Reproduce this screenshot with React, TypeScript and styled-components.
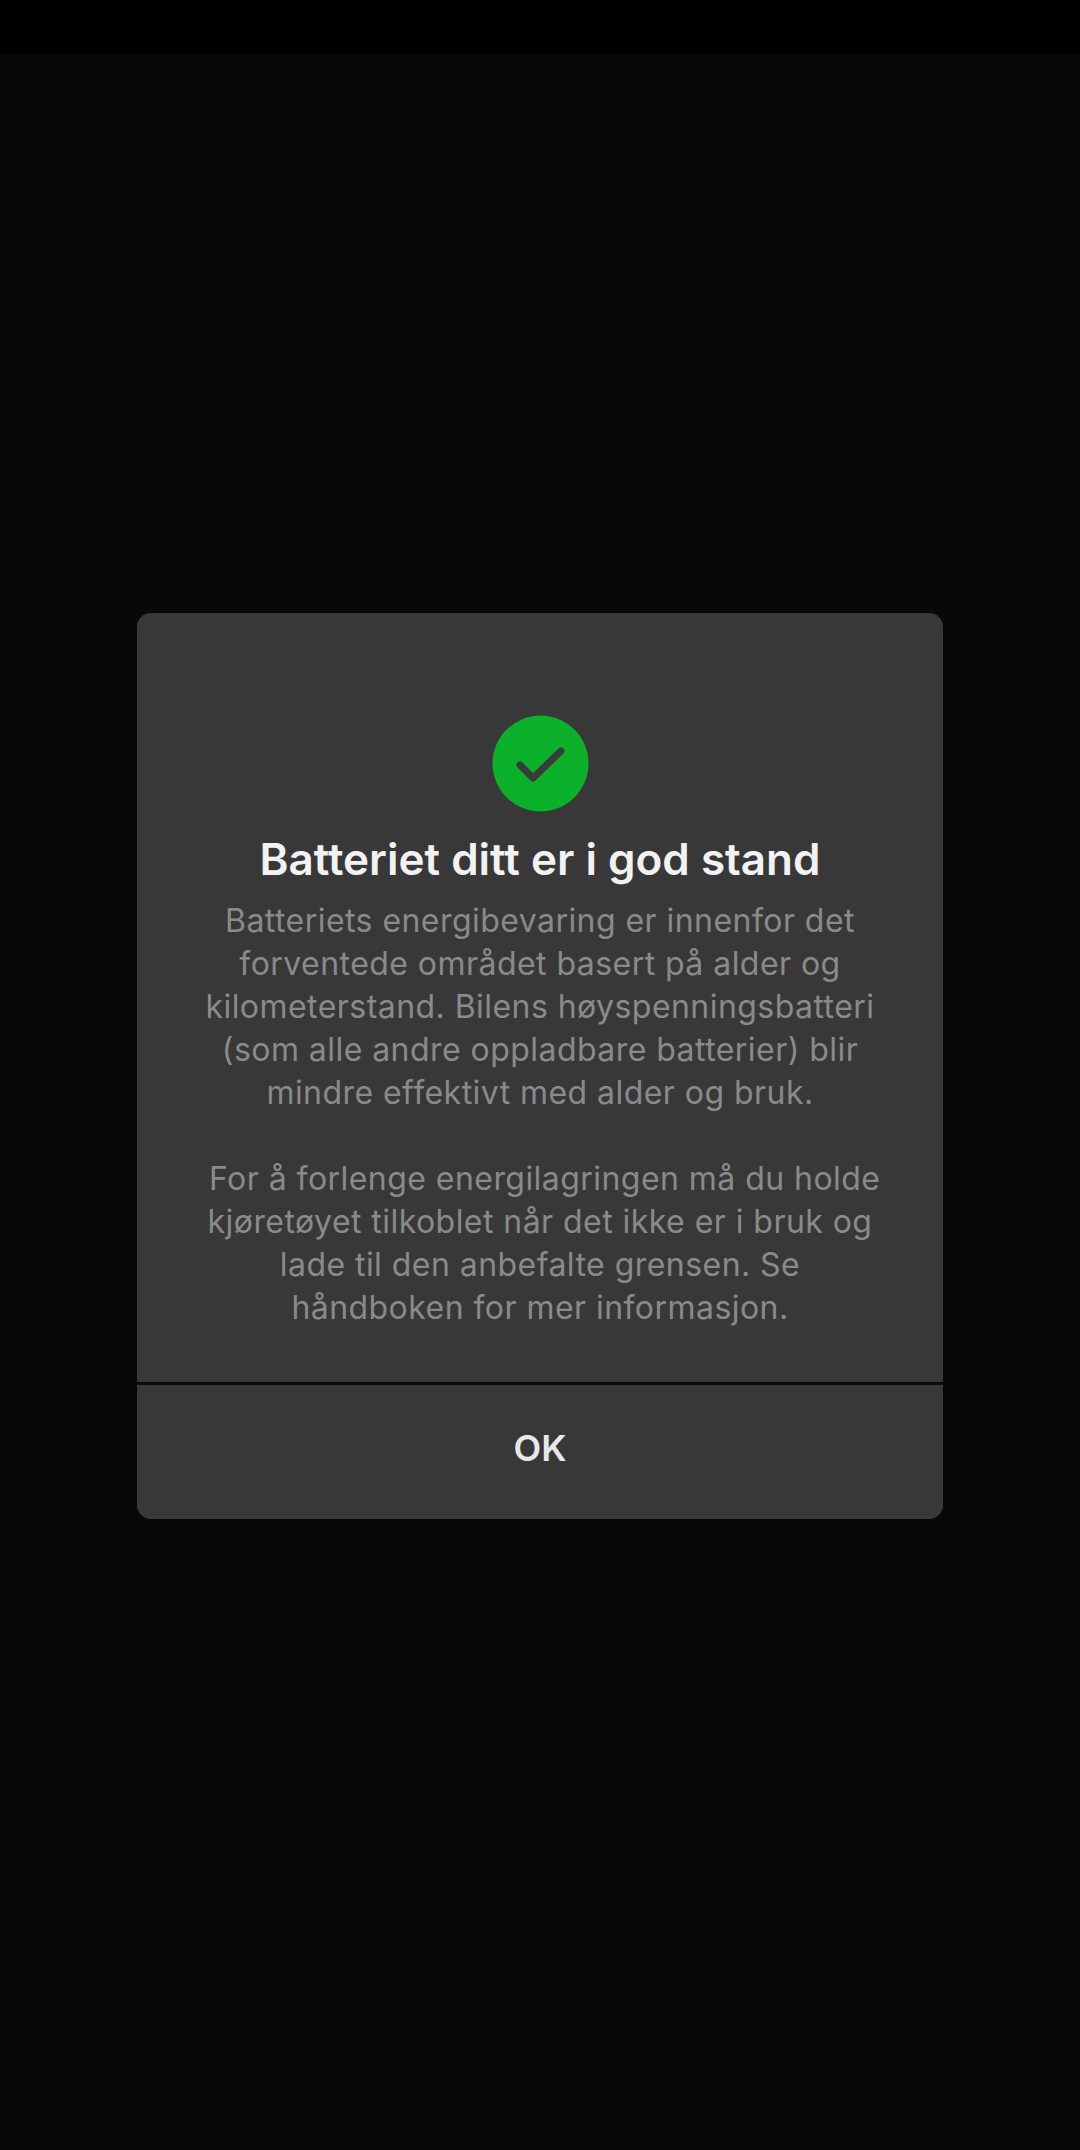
import React from 'react'
import styled, {createGlobalStyle} from 'styled-components'

const GlobalStyle = createGlobalStyle`
  html, body {
    margin: 0;
    padding: 0;
    background: #070909;
  }
`

const Screen = styled.div`
  width: 1080px;
  height: 2150px;
  display: flex;
  flex-direction: column;
  background: #070909;
  font-family: Inter, "Liberation Sans", sans-serif;
  overflow: hidden;
`

const StatusBar = styled.div`
  height: 54px;
  flex-shrink: 0;
  background: #000;
`

const Dialog = styled.div`
  width: 806px;
  margin: 559px auto 0;
  display: flex;
  flex-direction: column;
  background: #383838;
  border-radius: 14px;
  overflow: hidden;
`

const Content = styled.div`
  height: 769px;
  box-sizing: border-box;
  padding-top: 102px;
  display: flex;
  flex-direction: column;
  align-items: center;
`

const CheckBadge = styled.svg`
  width: 97px;
  height: 97px;
  display: block;
`

const Title = styled.h1`
  margin: 19px 0 0;
  font-size: 44px;
  line-height: 56px;
  font-weight: 600;
  color: #f2f2f2;
  text-align: center;
`

const Body = styled.p`
  margin: 12px 0 0;
  font-size: 32px;
  line-height: 43px;
  font-weight: 400;
  color: #8a8a8a;
  text-align: center;
  white-space: pre-wrap;
  letter-spacing: 0.45px;
`

const Divider = styled.div`
  height: 3px;
  background: #0c0c0c;
`

const OkButton = styled.button`
  height: 134px;
  border: 0;
  padding: 0 0 8px;
  background: transparent;
  font-family: inherit;
  font-size: 36px;
  font-weight: 600;
  color: #e8e8e8;
`

const App: React.FC = () => {
    return (
        <Screen>
            <GlobalStyle/>
            <StatusBar/>
            <Dialog>
                <Content>
                    <CheckBadge viewBox="0 0 97 97">
                        <circle cx="48.5" cy="48.5" r="48" fill="#0bb02b"/>
                        <path d="M28 50 L41 63 L69 36" fill="none" stroke="#3a3a3a" strokeWidth="7"
                              strokeLinecap="round" strokeLinejoin="round"/>
                    </CheckBadge>
                    <Title>Batteriet ditt er i god stand</Title>
                    <Body>
                        {'Batteriets energibevaring er innenfor det\nforventede området basert på alder og\nkilometerstand. Bilens høyspenningsbatteri\n(som alle andre oppladbare batterier) blir\nmindre effektivt med alder og bruk.\n\n\u00a0For å forlenge energilagringen må du holde\nkjøretøyet tilkoblet når det ikke er i bruk og\nlade til den anbefalte grensen. Se\nhåndboken for mer informasjon.'}
                    </Body>
                </Content>
                <Divider/>
                <OkButton>OK</OkButton>
            </Dialog>
        </Screen>
    )
}

export default App
